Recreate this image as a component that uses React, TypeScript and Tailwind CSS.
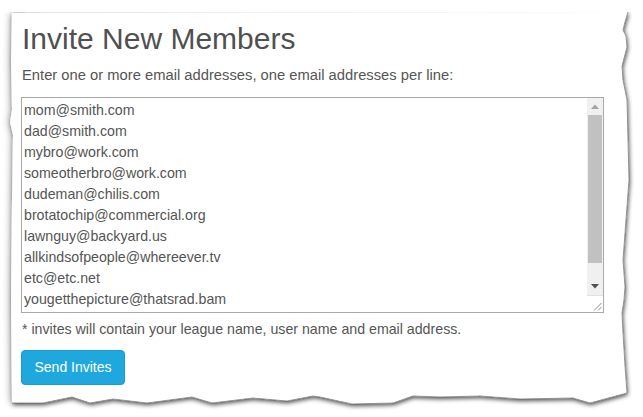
import React from "react";

const emails = [
  "mom@smith.com",
  "dad@smith.com",
  "mybro@work.com",
  "someotherbro@work.com",
  "dudeman@chilis.com",
  "brotatochip@commercial.org",
  "lawnguy@backyard.us",
  "allkindsofpeople@whereever.tv",
  "etc@etc.net",
  "yougetthepicture@thatsrad.bam",
];

const rightBottom =
  "M628,12 L625,22 L623,30 L626,36 L627,47 L622,66 L623,80 L627,100 L629,180 L625,233 L623,260 L625,287 L624,300 L622,313 L623,333 L625,366 L627,393 " +
  "L590,403 L573,398 L520,399 L480,396 L440,397 L413,396 L393,403 L352,404 L320,397 L313,396 L287,401 L253,398 L212,403 L192,397 L147,403 L113,399 L90,403 L72,397 L43,403 L12,403";

const full =
  "M12,13 L628,12 " +
  rightBottom.slice(9) +
  " L11,300 L12,200 L13,135 L10,122 L12,110 L11,60 Z";

function Paper() {
  return (
    <svg
      className="absolute inset-0"
      width="643"
      height="417"
      viewBox="0 0 643 417"
      aria-hidden="true"
    >
      <defs>
        <filter id="torn" x="-10%" y="-10%" width="120%" height="120%">
          <feGaussianBlur in="SourceAlpha" stdDeviation="2.3" result="b1" />
          <feOffset in="b1" dx="1" dy="2" result="o1" />
          <feComponentTransfer in="o1" result="s1">
            <feFuncA type="linear" slope="0.6" />
          </feComponentTransfer>
          <feGaussianBlur in="SourceAlpha" stdDeviation="3.5" result="b2" />
          <feOffset in="b2" dx="-2" dy="0" result="o2" />
          <feComponentTransfer in="o2" result="s2">
            <feFuncA type="linear" slope="0.3" />
          </feComponentTransfer>
          <feMerge>
            <feMergeNode in="s1" />
            <feMergeNode in="s2" />
            <feMergeNode in="SourceGraphic" />
          </feMerge>
        </filter>
      </defs>
      <path d={full} fill="#ffffff" filter="url(#torn)" />
      <rect x="0" y="0" width="643" height="12" fill="#ffffff" />
      <path d={rightBottom} fill="none" stroke="#6f6f6f" strokeWidth="0.7" />
    </svg>
  );
}

function Scrollbar() {
  return (
    <div className="flex w-[16px] shrink-0 flex-col bg-[#f0f0f0]">
      <div className="flex h-[17px] items-center justify-center">
        <svg width="8" height="5" viewBox="0 0 8 5">
          <path d="M0,5 L4,0.5 L8,5 Z" fill="#a3a3a3" />
        </svg>
      </div>
      <div className="mx-[1px] h-[148px] bg-[#c1c1c1]" />
      <div className="flex-1" />
      <div className="flex h-[17px] items-center justify-center">
        <svg width="8" height="5" viewBox="0 0 8 5">
          <path d="M0,0 L8,0 L4,4.5 Z" fill="#505050" />
        </svg>
      </div>
      <div className="relative h-[17px] border-t border-[#e2e2e2] bg-white">
        <svg className="absolute bottom-[1px] right-[1px]" width="9" height="9" viewBox="0 0 9 9">
          <path d="M8.5,1 L1,8.5 M8.5,5 L5,8.5" stroke="#8a8a8a" strokeWidth="1" />
        </svg>
      </div>
    </div>
  );
}

export default function App() {
  return (
    <div
      className="relative h-[417px] w-[643px] overflow-hidden bg-white"
      style={{ fontFamily: '"Liberation Sans", Arial, sans-serif' }}
    >
      <Paper />
      <div className="relative flex flex-col items-start pl-[21px] pt-[22px] text-[#555]">
        <h2 className="pl-[1px] text-[30px] leading-[33px] font-normal text-[#505050]">
          Invite New Members
        </h2>
        <p className="mt-[10px] pl-[1px] text-[14.75px] leading-[20px] text-[#555]">
          Enter one or more email addresses, one email addresses per line:
        </p>
        <div className="mt-[12px] flex h-[216px] w-[583px] border border-[#a9a9a9] bg-white">
          <div className="flex-1 overflow-hidden p-[2px] text-[14.2px] leading-[21px] text-[#555]">
            {emails.map((e) => (
              <div key={e}>{e}</div>
            ))}
          </div>
          <Scrollbar />
        </div>
        <p className="mt-[6px] pl-[1px] text-[14.2px] leading-[20px] text-[#555]">
          * invites will contain your league name, user name and email address.
        </p>
        <button
          type="button"
          className="mt-[11px] flex h-[35px] w-[104px] items-center justify-center rounded-[4px] border border-[#1b9bd0] bg-[#1fa8dd] text-[14px] text-white"
        >
          Send Invites
        </button>
      </div>
    </div>
  );
}
